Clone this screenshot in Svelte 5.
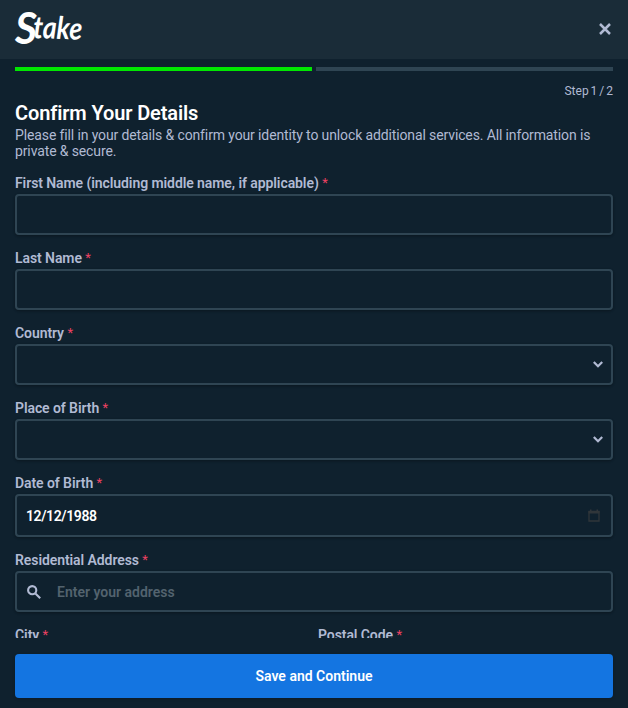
<script lang="ts">
	type Field = { id: string; label: string; kind: 'text' | 'select' | 'date' | 'search'; value?: string; placeholder?: string };

	const fields: Field[] = [
		{ id: 'first-name', label: 'First Name (including middle name, if applicable)', kind: 'text' },
		{ id: 'last-name', label: 'Last Name', kind: 'text' },
		{ id: 'country', label: 'Country', kind: 'select' },
		{ id: 'birth-place', label: 'Place of Birth', kind: 'select' },
		{ id: 'birth-date', label: 'Date of Birth', kind: 'date', value: '12/12/1988' },
		{ id: 'address', label: 'Residential Address', kind: 'search', placeholder: 'Enter your address' }
	];

	const steps = 2;
	let step = $state(1);
</script>

<div class="modal">
	<header class="header">
		<svg class="logo" width="68" height="36" viewBox="0 0 68 36" role="img" aria-label="Stake">
			<text x="0" y="34" class="logo-cap" textLength="22" lengthAdjust="spacingAndGlyphs">S</text>
			<text x="18" y="28" class="logo-rest" textLength="49" lengthAdjust="spacingAndGlyphs" transform="rotate(2 18 28)">take</text>
		</svg>
		<button class="close" aria-label="Close">
			<svg width="12" height="12" viewBox="0 0 12 12"><path d="M1 1 11 11M11 1 1 11" /></svg>
		</button>
	</header>

	<div class="content">
		<div class="progress">
			{#each Array(steps) as _, i}
				<div class="bar" class:active={i < step}></div>
			{/each}
		</div>
		<div class="step">Step {step} / {steps}</div>

		<h1>Confirm Your Details</h1>
		<p class="intro">
			Please fill in your details &amp; confirm your identity to unlock additional services. All information is private &amp; secure.
		</p>

		<div class="fields">
			{#each fields as field}
				<label class="field" for={field.id}>
					<span class="label">{field.label} <span class="required">*</span></span>
					<span class="control {field.kind}">
						{#if field.kind === 'search'}
							<svg class="search-icon" width="14" height="14" viewBox="0 0 14 14">
								<circle cx="5.2" cy="5.2" r="4.1" />
								<path d="m8.4 8.4 4.8 4.8" />
							</svg>
						{/if}
						{#if field.kind === 'select'}
							<select id={field.id}></select>
							<svg class="chevron" width="10" height="7" viewBox="0 0 10 7"><path d="m.8 1 4.2 4.2L9.2 1" /></svg>
						{:else}
							<input id={field.id} type="text" value={field.value ?? ''} placeholder={field.placeholder ?? ''} />
						{/if}
						{#if field.kind === 'date'}
							<svg class="calendar" width="12" height="13" viewBox="0 0 12 13">
								<path d="M1 2.5h10v9.5H1z" fill="none" stroke="currentColor" stroke-width="1.3" />
								<path d="M.5 2h11v2.5H.5zM2 .5h1.5V2H2zM8.5.5H10V2H8.5z" fill="currentColor" />
							</svg>
						{/if}
					</span>
				</label>
			{/each}

			<div class="row">
				<label class="field">
					<span class="label">City <span class="required">*</span></span>
					<span class="control"><input type="text" /></span>
				</label>
				<label class="field">
					<span class="label">Postal Code <span class="required">*</span></span>
					<span class="control"><input type="text" /></span>
				</label>
			</div>
		</div>
	</div>

	<footer class="footer">
		<button class="submit">Save and Continue</button>
	</footer>
</div>

<style>
	:global(body) {
		background: #0f212e;
	}

	* {
		box-sizing: border-box;
	}

	.modal {
		display: flex;
		flex-direction: column;
		height: 708px;
		overflow: hidden;
		background: #0f212e;
		color: #b1bad3;
		font-family: Roboto, 'Liberation Sans', sans-serif;
		font-size: 14px;
		line-height: 16px;
	}

	.header {
		display: flex;
		flex: none;
		justify-content: space-between;
		align-items: center;
		height: 59px;
		padding: 0 15px;
		background: #1a2c38;
	}

	.logo {
		margin-bottom: 4px;
		overflow: visible;
		fill: #fff;
		font-family: Lato, sans-serif;
		font-style: italic;
		font-weight: 700;
	}

	.logo-cap {
		font-size: 43px;
	}

	.logo-rest {
		font-size: 31px;
	}

	button {
		border: 0;
		font: inherit;
		cursor: pointer;
	}

	.close {
		display: flex;
		margin: 0 2px 2px 0;
		padding: 0;
		background: none;
	}

	.close path {
		fill: none;
		stroke: #b1bad3;
		stroke-width: 2.5;
	}

	.content {
		flex: none;
		height: 579px;
		padding: 8px 15px 0;
		overflow: hidden;
	}

	.progress {
		display: flex;
		gap: 4px;
	}

	.bar {
		flex: 1;
		height: 4px;
		background: #2f4553;
	}

	.bar.active {
		background: #00e701;
	}

	.step {
		margin-top: 12px;
		font-size: 12px;
		text-align: right;
		word-spacing: -1px;
	}

	h1 {
		margin: 1px 0;
		color: #fff;
		font-size: 20px;
		font-weight: 600;
		letter-spacing: -0.12px;
		line-height: 26px;
	}

	.intro {
		margin: 0;
		letter-spacing: -0.125px;
	}

	.fields {
		display: flex;
		flex-direction: column;
		gap: 15px;
		margin-top: 16px;
	}

	.field {
		display: flex;
		flex: 1;
		flex-direction: column;
		gap: 3px;
	}

	.label {
		height: 16px;
		font-weight: 600;
		letter-spacing: -0.08px;
	}

	.required {
		color: #ed4163;
		font-size: 13px;
		font-weight: 400;
		line-height: 1;
		vertical-align: 1px;
	}

	.control {
		display: flex;
		align-items: center;
		height: 41px;
		border: 2px solid #2f4553;
		border-radius: 4px;
		box-shadow: 0 1px 3px rgba(0, 0, 0, 0.2), 0 1px 2px rgba(0, 0, 0, 0.12);
	}

	.control.date {
		height: 43px;
	}

	.date input {
		letter-spacing: -0.4px;
	}

	input,
	select {
		flex: 1;
		min-width: 0;
		height: 100%;
		padding: 0 9px;
		border: 0;
		outline: 0;
		appearance: none;
		background: none;
		color: #fff;
		font: inherit;
		font-weight: 600;
	}

	input::placeholder {
		color: #53636e;
		opacity: 1;
	}

	.chevron {
		margin-right: 8px;
		fill: none;
		stroke: #b1bad3;
		stroke-width: 2.2;
	}

	.calendar {
		margin-right: 11px;
		color: #30363a;
	}

	.search-icon {
		margin: 0 7px 0 10px;
		fill: none;
		stroke: #b1bad3;
		stroke-width: 2.1;
	}

	.row {
		display: flex;
		gap: 8px;
	}

	.footer {
		padding: 16px 15px 10px;
	}

	.submit {
		display: block;
		width: 100%;
		height: 44px;
		border-radius: 4px;
		background: #1475e1;
		color: #fff;
		font-weight: 600;
		box-shadow: 0 1px 3px rgba(0, 0, 0, 0.2);
	}
</style>
